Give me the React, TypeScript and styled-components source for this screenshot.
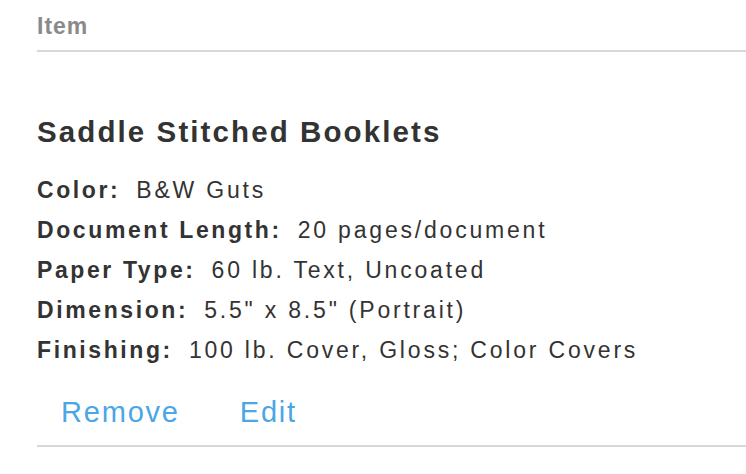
import styled, { createGlobalStyle } from "styled-components";

const GlobalStyle = createGlobalStyle`
  body {
    margin: 0;
    background: #fff;
    font-family: "Liberation Sans", Arial, sans-serif;
    color: #333;
  }
`;

const Page = styled.div`
  padding-left: 37px;
  width: 709px;
`;

const Header = styled.div`
  padding: 12px 0 10px;
  border-bottom: 2px solid #d8d8d8;
  font-size: 23px;
  line-height: 28px;
  font-weight: 700;
  letter-spacing: 1px;
  color: #8a8a8a;
`;

const ItemBlock = styled.div`
  padding: 63px 0 16px;
  border-bottom: 2px solid #d8d8d8;
`;

const Title = styled.h2`
  margin: 0 0 21px;
  font-size: 29.5px;
  line-height: 34px;
  font-weight: 700;
  letter-spacing: 2.1px;
  color: #333;
`;

const Specs = styled.div`
  display: flex;
  flex-direction: column;
`;

const Row = styled.div`
  display: flex;
  font-size: 23px;
  line-height: 40px;
  white-space: nowrap;
  color: #333;
`;

const Label = styled.span`
  font-weight: 700;
  letter-spacing: 2.6px;
`;

const Value = styled.span`
  margin-left: 16px;
  letter-spacing: 2.8px;
`;

const Actions = styled.div`
  display: flex;
  gap: 60px;
  margin-top: 25px;
  padding-left: 24px;
`;

const ActionLink = styled.a`
  font-size: 29px;
  line-height: 34px;
  letter-spacing: 1.8px;
  color: #4aa6e6;
  text-decoration: none;
  cursor: pointer;
`;

const specs = [
  { label: "Color:", value: "B&W Guts" },
  { label: "Document Length:", value: "20 pages/document" },
  { label: "Paper Type:", value: "60 lb. Text, Uncoated" },
  { label: "Dimension:", value: "5.5\" x 8.5\" (Portrait)" },
  { label: "Finishing:", value: "100 lb. Cover, Gloss; Color Covers" },
];

const App = () => {
  return (
    <>
      <GlobalStyle />
      <Page>
        <Header>Item</Header>
        <ItemBlock>
          <Title>Saddle Stitched Booklets</Title>
          <Specs>
            {specs.map((s) => (
              <Row key={s.label}>
                <Label>{s.label}</Label>
                <Value>{s.value}</Value>
              </Row>
            ))}
          </Specs>
          <Actions>
            <ActionLink>Remove</ActionLink>
            <ActionLink>Edit</ActionLink>
          </Actions>
        </ItemBlock>
      </Page>
    </>
  );
};

export default App;
